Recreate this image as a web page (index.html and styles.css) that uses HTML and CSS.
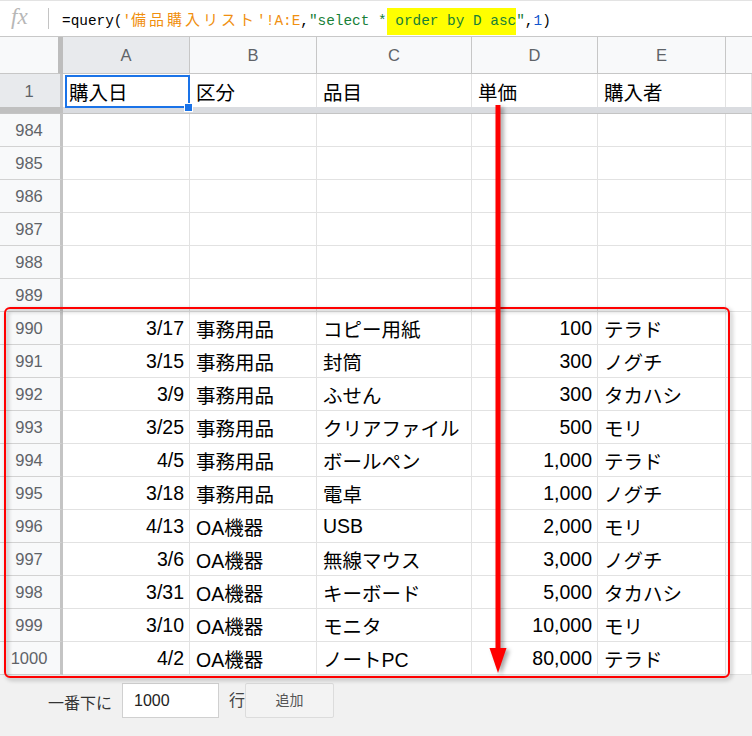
FILE: index.html
```html
<!DOCTYPE html>
<html lang="ja">
<head>
<meta charset="utf-8">
<link rel="stylesheet" href="styles.css">
</head>
<body>
<div class="page">
  <div class="formula-bar">
    <span class="fx">fx</span>
    <span class="fsep"></span>
    <span class="formula">=query(<span class="f-range">'<span class="f-cjk">備品購入リスト</span>'!A:E</span>,<span class="f-str">"select *<span class="f-hl"> order by D asc</span>"</span>,<span class="f-num">1</span>)</span>
  </div>

  <div class="sheet">
    <div class="hdr corner"></div>
    <div class="hdr col sel">A</div>
    <div class="hdr col">B</div>
    <div class="hdr col">C</div>
    <div class="hdr col">D</div>
    <div class="hdr col">E</div>
    <div class="hdr col last"></div>

    <div class="rh sel">1</div>
    <div class="c r1 active">購入日</div>
    <div class="c r1">区分</div>
    <div class="c r1">品目</div>
    <div class="c r1">単価</div>
    <div class="c r1">購入者</div>
    <div class="c r1"></div>

    <div class="fz rhfz"></div>
    <div class="fz"></div><div class="fz"></div><div class="fz"></div><div class="fz"></div><div class="fz"></div><div class="fz"></div>

    <div class="rh">984</div><div class="c"></div><div class="c"></div><div class="c"></div><div class="c"></div><div class="c"></div><div class="c"></div>
    <div class="rh">985</div><div class="c"></div><div class="c"></div><div class="c"></div><div class="c"></div><div class="c"></div><div class="c"></div>
    <div class="rh">986</div><div class="c"></div><div class="c"></div><div class="c"></div><div class="c"></div><div class="c"></div><div class="c"></div>
    <div class="rh">987</div><div class="c"></div><div class="c"></div><div class="c"></div><div class="c"></div><div class="c"></div><div class="c"></div>
    <div class="rh">988</div><div class="c"></div><div class="c"></div><div class="c"></div><div class="c"></div><div class="c"></div><div class="c"></div>
    <div class="rh">989</div><div class="c"></div><div class="c"></div><div class="c"></div><div class="c"></div><div class="c"></div><div class="c"></div>

    <div class="rh">990</div><div class="c num">3/17</div><div class="c">事務用品</div><div class="c">コピー用紙</div><div class="c num">100</div><div class="c">テラド</div><div class="c"></div>
    <div class="rh">991</div><div class="c num">3/15</div><div class="c">事務用品</div><div class="c">封筒</div><div class="c num">300</div><div class="c">ノグチ</div><div class="c"></div>
    <div class="rh">992</div><div class="c num">3/9</div><div class="c">事務用品</div><div class="c">ふせん</div><div class="c num">300</div><div class="c">タカハシ</div><div class="c"></div>
    <div class="rh">993</div><div class="c num">3/25</div><div class="c">事務用品</div><div class="c">クリアファイル</div><div class="c num">500</div><div class="c">モリ</div><div class="c"></div>
    <div class="rh">994</div><div class="c num">4/5</div><div class="c">事務用品</div><div class="c">ボールペン</div><div class="c num">1,000</div><div class="c">テラド</div><div class="c"></div>
    <div class="rh">995</div><div class="c num">3/18</div><div class="c">事務用品</div><div class="c">電卓</div><div class="c num">1,000</div><div class="c">ノグチ</div><div class="c"></div>
    <div class="rh">996</div><div class="c num">4/13</div><div class="c">OA機器</div><div class="c">USB</div><div class="c num">2,000</div><div class="c">モリ</div><div class="c"></div>
    <div class="rh">997</div><div class="c num">3/6</div><div class="c">OA機器</div><div class="c">無線マウス</div><div class="c num">3,000</div><div class="c">ノグチ</div><div class="c"></div>
    <div class="rh">998</div><div class="c num">3/31</div><div class="c">OA機器</div><div class="c">キーボード</div><div class="c num">5,000</div><div class="c">タカハシ</div><div class="c"></div>
    <div class="rh">999</div><div class="c num">3/10</div><div class="c">OA機器</div><div class="c">モニタ</div><div class="c num">10,000</div><div class="c">モリ</div><div class="c"></div>
    <div class="rh">1000</div><div class="c num">4/2</div><div class="c">OA機器</div><div class="c">ノートPC</div><div class="c num">80,000</div><div class="c">テラド</div><div class="c"></div>
  </div>

  <div class="footer">
    <span class="f-label">一番下に</span>
    <span class="f-input">1000</span>
    <span class="f-row">行</span>
    <span class="f-btn">追加</span>
  </div>

  <div class="redbox"></div>
  <svg class="arrow" width="30" height="580" viewBox="0 0 30 580">
    <rect x="10.5" y="0" width="5" height="548" fill="#ff0000"/>
    <polygon points="4.5,543 21.5,543 13,568" fill="#ff0000"/>
  </svg>
</div>
</body>
</html>
```

FILE: styles.css
```css
* { box-sizing: border-box; }
html, body { margin: 0; padding: 0; }
body {
  width: 752px;
  height: 736px;
  overflow: hidden;
  background: #ffffff;
  font-family: "Liberation Sans", "Noto Sans CJK JP", Arial, sans-serif;
}
.page {
  position: relative;
  width: 752px;
  height: 736px;
  overflow: hidden;
}

/* formula bar */
.formula-bar {
  height: 37px;
  border-top: 1px solid #e3e3e3;
  border-bottom: 1px solid #c8c8c8;
  display: flex;
  align-items: center;
  background: #fff;
}
.fx {
  font-family: "Liberation Serif", "DejaVu Serif", serif;
  font-style: italic;
  font-size: 23px;
  color: #b7b7b7;
  margin-left: 11px;
  width: 24px;
  line-height: 1;
  margin-top: -4px;
}
.fsep {
  width: 1px;
  height: 21px;
  background: #c4c4c4;
  margin-left: 13px;
  margin-right: 13px;
}
.formula {
  font-family: "Liberation Mono", "DejaVu Sans Mono", monospace;
  font-size: 14.4px;
  color: #000;
  white-space: nowrap;
  letter-spacing: 0;
}
.f-range { color: #f09010; }
.f-cjk {
  font-family: "Noto Sans CJK JP", sans-serif;
  font-size: 15px;
  letter-spacing: 3px;
}
.f-str { color: #188038; }
.f-hl { background: #ffff00; padding: 5px 0 6px; }
.f-num { color: #1155cc; }

/* sheet grid */
.sheet {
  display: grid;
  grid-template-columns: 63px 127px 127px 155px 126px 128px 26px;
  grid-template-rows: 37px 33px 7px repeat(17, 33px);
}
.hdr {
  background: #f8f9fa;
  color: #5f6368;
  font-size: 16.5px;
  display: flex;
  align-items: center;
  justify-content: center;
  border-right: 1px solid #c7c7c7;
  border-bottom: 1px solid #c7c7c7;
}
.hdr.corner { border-right: 5px solid #bdbdbd; }
.hdr.sel { background: #e8eaed; }
.hdr.last { border-right: none; }

.rh {
  background: #f8f9fa;
  color: #5f6368;
  font-size: 16.5px;
  display: flex;
  align-items: center;
  justify-content: center;
  border-right: 3px solid #c4c4c4;
  border-bottom: 1px solid #d2d2d2;
  padding-right: 2px;
  padding-top: 1px;
}
.rh.sel { background: #e8eaed; border-bottom: none; }

.c {
  position: relative;
  font-size: 19.5px;
  color: #000;
  display: flex;
  align-items: center;
  padding: 1px 6px 0;
  white-space: nowrap;
  border-right: 1px solid #e2e2e2;
  border-bottom: 1px solid #e2e2e2;
}
.c.num { justify-content: flex-end; padding-right: 5px; }
.c.r1 { border-bottom: none; }
.c.active::after {
  content: "";
  position: absolute;
  left: 2px;
  top: 1px;
  right: -1px;
  bottom: -1px;
  border: 2px solid #1a73e8;
}
.c.active::before {
  content: "";
  position: absolute;
  right: -4px;
  bottom: -5px;
  width: 7px;
  height: 7px;
  background: #1a73e8;
  border: 1px solid #fff;
  z-index: 2;
}

.fz {
  background: #dadce0;
  border-bottom: 1px solid #c4c4c4;
}
.fz.rhfz { background: #c0c0c0; }

/* footer */
.footer {
  height: 61px;
  background: #f1f1f1;
  display: flex;
  align-items: flex-start;
  padding: 8px 0 0 48px;
  font-family: "Noto Sans CJK JP", "Liberation Sans", sans-serif;
}
.f-label {
  font-size: 16px;
  color: #333;
  height: 35px;
  line-height: 35px;
  margin-right: 10px;
  margin-top: 2px;
}
.f-input {
  width: 97px;
  height: 35px;
  background: #fff;
  border: 1px solid #d0d0d0;
  font-family: "Liberation Sans", Arial, sans-serif;
  font-size: 16px;
  color: #222;
  line-height: 33px;
  padding-left: 11px;
}
.f-row {
  font-size: 16px;
  color: #444;
  line-height: 33px;
  margin-left: 10px;
  width: 16px;
}
.f-btn {
  width: 89px;
  height: 35px;
  border: 1px solid #dcdcdc;
  border-radius: 2px;
  background: #f3f3f3;
  color: #555;
  font-size: 14px;
  line-height: 30px;
  text-align: center;
}

/* annotations */
.redbox {
  position: absolute;
  left: 4px;
  top: 307px;
  width: 726px;
  height: 371px;
  border: 2.5px solid #ff0000;
  border-radius: 6px;
  filter: drop-shadow(2px 2px 2px rgba(0,0,0,0.35));
}
.arrow {
  position: absolute;
  left: 485px;
  top: 105px;
  filter: drop-shadow(3px 2px 2px rgba(0,0,0,0.35));
}
```
